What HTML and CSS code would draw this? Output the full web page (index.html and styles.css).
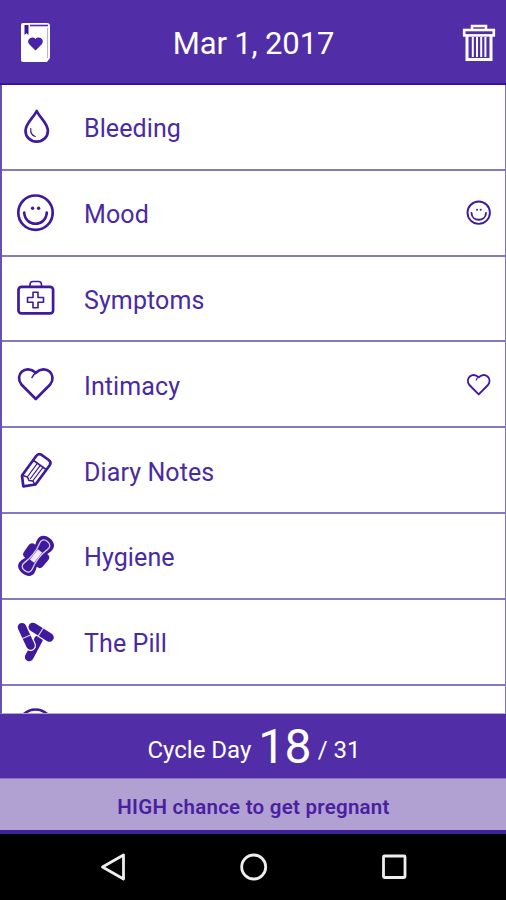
FILE: index.html
```html
<!DOCTYPE html>
<html lang="en">
<head>
  <meta charset="UTF-8" />
  <meta name="viewport" content="width=device-width, initial-scale=1" />
  <title>Mar 1, 2017</title>
  <link rel="stylesheet" href="styles.css">
</head>
<body>
  <div class="app">
    <header class="header">
      <svg class="book" width="32" height="42" viewBox="0 0 32 42">
        <path d="M3 1h24a3 3 0 0 1 3 3v32l-3 4H3a2 2 0 0 1-2-2V3a2 2 0 0 1 2-2z" fill="#fff"/>
        <path d="M10 3.500h18" stroke="#512da8" stroke-width="1.600"/>
        <path d="M27.600 6v30" stroke="#b8a6dc" stroke-width="1"/>
        <path d="M4.500 3h4v10l-2-1.800-2 1.800z" fill="#3a1798"/>
        <path d="M15.500 28.500l-6.500-6.500c-3-4.500 3-9 6.500-5 3.500-4 9.500.5 6.500 5z" fill="#4a22a5"/>
      </svg>
      <h1>Mar 1, 2017</h1>
      <svg class="trash" width="34" height="40" viewBox="0 0 34 40" fill="none" stroke="#fff">
        <path d="M10 6V3h14v3" stroke-width="2.500"/>
        <rect x="2.200" y="7" width="29.600" height="5.400" stroke-width="2.600"/>
        <path d="M5 12v24.500h24V12" stroke-width="3"/>
        <path d="M10.800 14v20M15 14v20M19.200 14v20M23.400 14v20" stroke-width="2"/>
      </svg>
    </header>

    <main class="list">
      <div class="row">
        <svg class="icon" viewBox="0 0 40 40">
          <path d="M20.700 4C17.500 11 9.500 16 9.500 24a11.200 10.700 0 0 0 22.400 0C31.900 16 24 11 20.700 4z"/>
          <path class="thin" d="M14.800 21.500c-.5 4 1.500 7 4.500 8"/>
        </svg>
        <span class="label">Bleeding</span>
      </div>
      <div class="row">
        <svg class="icon" viewBox="0 0 40 40">
          <circle cx="19.500" cy="19.700" r="17.200"/>
          <path d="M8.200 19.500c1 15 21.600 15 22.600 0"/>
          <circle class="dot" cx="16.600" cy="15.200" r="1.700"/>
          <circle class="dot" cx="22.600" cy="15.200" r="1.700"/>
        </svg>
        <span class="label">Mood</span>
        <svg class="mark" viewBox="0 0 26 26">
          <circle cx="12.700" cy="12.700" r="11.200"/>
          <path d="M5.500 13c.5 9 14 9 14.500 0"/>
          <circle class="dot" cx="11" cy="9.800" r="1"/>
          <circle class="dot" cx="14.700" cy="9.800" r="1"/>
        </svg>
      </div>
      <div class="row">
        <svg class="icon" viewBox="0 0 40 40">
          <rect x="2.500" y="8.800" width="34.600" height="26.600" rx="3"/>
          <path class="mid" d="M14 8V6.500q0-3 3-3h5.500q3 0 3 3V8"/>
          <path class="mid" d="M17 14.200h5v5.300h5.500v4.800H22v5.500h-5v-5.500h-5.500v-4.800H17z"/>
        </svg>
        <span class="label">Symptoms</span>
      </div>
      <div class="row">
        <svg class="icon" viewBox="0 0 40 40">
          <path d="M19.800 35L5.400 20.500C-2 11 9.500-.5 19.800 8.800 30-.5 41.500 11 34.200 20.500z"/>
          <path class="mid" d="M20 9q-3 1.500-4 4.500"/>
        </svg>
        <span class="label">Intimacy</span>
        <svg class="mark" viewBox="0 0 26 26">
          <path d="M12.700 23.400L3.400 14C-1.300 7.500 6.200.5 12.700 6.200 19.200.5 26.700 7.500 22 14z"/>
          <path class="thin" d="M12.700 6q-2 1-2.500 3"/>
        </svg>
      </div>
      <div class="row">
        <svg class="icon" viewBox="0 0 40 40">
          <path d="M7.300 36.300L6 25.500 20.200 6q2.200-3 5-1.300l7.500 5.300q3 2.300 1 5.200L19.500 34.500z"/>
          <path class="mid" d="M17.500 10.500l12.700 9M6.500 25.500l5 1.500 1.500 3.500 4 .5 1.800 3.500"/>
          <path class="thin" d="M12 26l9.500-12.800M17 30.500L27 17.300M14.500 28.500L24.300 15.300"/>
        </svg>
        <span class="label">Diary Notes</span>
      </div>
      <div class="row">
        <svg class="icon" viewBox="0 0 40 40">
          <g transform="rotate(38 20 20)">
            <path class="solid" d="M12 11.500h16q4.500 0 4.200 5l-.4 7.500q0 4-4 4H12q-4 0-4-4l-.4-7.500q-.3-5 4.400-5z"/>
            <path class="solid" d="M20-2.500c6.500 0 10 4 9 9-.7 4-3 7-3 13.500s2.300 9.500 3 13.500c1 5-2.500 8.500-9 8.500s-10-3.500-9-8.500c.7-4 3-7 3-13.500s-2.300-9.500-3-13.500c-1-5 2.500-9 9-9z"/>
            <path class="light" d="M20 1.500c4.500 0 6 3 5 6.500-1.200 4-1.700 7-1.700 12s.5 8 1.700 12c1 3.500-.5 6.500-5 6.500s-6-3-5-6.500c1.200-4 1.700-7 1.700-12s-.5-8-1.700-12c-1-3.500.5-6.500 5-6.500z"/>
            <path class="fill-light" d="M17.400 13.500h5.200v13h-5.200z"/>
          </g>
        </svg>
        <span class="label">Hygiene</span>
      </div>
      <div class="row">
        <svg class="icon" viewBox="0 0 40 40">
          <path class="pill" d="M22.500 17.500L13.200 35"/>
          <path class="pill-edge" d="M6 5.200L14.500 23.500"/>
          <path class="pill" d="M6 5.200L14.500 23.500"/>
          <path class="pill-edge" d="M16.800 5L33.500 15.500"/>
          <path class="pill" d="M16.800 5L33.500 15.500"/>
          <path class="light" d="M6.500 16.500l8-3.500M27 6.500l-4.500 7"/>
        </svg>
        <span class="label">The Pill</span>
      </div>
      <div class="row">
        <svg class="icon" viewBox="0 0 40 40">
          <circle cx="19.500" cy="19.700" r="17.200"/>
        </svg>
      </div>
    </main>

    <div class="cycle">
      <span>Cycle Day</span>
      <span class="day">18</span>
      <span>/ 31</span>
    </div>
    <div class="chance">HIGH chance to get pregnant</div>

    <nav class="navbar">
      <svg viewBox="0 0 30 30"><path d="M3.500 15L24.500 3v24z"/></svg>
      <svg viewBox="0 0 30 30"><circle cx="14.700" cy="15" r="12"/></svg>
      <svg viewBox="0 0 30 30"><rect x="4.500" y="4" width="21.500" height="21.500" rx="1"/></svg>
    </nav>
  </div>
</body>
</html>
```

FILE: styles.css
```css
* {
  box-sizing: border-box;
}
body {
  margin: 0;
  background: #000;
  font-family: Roboto, sans-serif;
}
.app {
  width: 506px;
  height: 900px;
  display: flex;
  flex-direction: column;
  overflow: hidden;
}
.header {
  flex: none;
  height: 85px;
  padding: 3px 10px 0 20px;
  display: flex;
  align-items: center;
  justify-content: space-between;
  background: #512da8;
  border-bottom: 2px solid #3512a0;
}
.header h1 {
  margin: 0 7px 0 0;
  font-size: 31px;
  font-weight: 400;
  letter-spacing: -0.15px;
  color: #fff;
}
.list {
  flex: none;
  height: 629px;
  overflow: hidden;
  background: #fff;
  border-left: 2px solid #6650b0;
  border-right: 1px solid #8270c4;
  border-bottom: 1px solid #b3a5d9;
}
.row {
  height: 85.8px;
  padding: 0 13px 0 14px;
  display: flex;
  align-items: center;
  border-bottom: 2px solid #8878c0;
}
.icon,
.mark {
  flex: none;
  fill: none;
  stroke: #3f1a9c;
  stroke-width: 2.7;
  stroke-linejoin: round;
  stroke-linecap: round;
}
.icon {
  width: 40px;
  height: 40px;
  overflow: visible;
}
.mark {
  width: 26px;
  height: 26px;
  stroke-width: 1.9;
}
.thin {
  stroke-width: 1.2;
}
.mid {
  stroke-width: 1.6;
}
.dot,
.solid {
  fill: #3f1a9c;
  stroke: none;
}
.light {
  stroke: #d9cfee;
  stroke-width: 1.3;
}
.fill-light {
  fill: #f0ebf8;
  stroke: none;
}
.pill {
  stroke-width: 8.6;
}
.pill-edge {
  stroke: #fff;
  stroke-width: 11;
}
.label {
  flex: 1;
  margin-left: 28px;
  padding-top: 4px;
  font-size: 25px;
  letter-spacing: 0.1px;
  color: #4a2aa3;
}
.cycle {
  flex: none;
  height: 64px;
  padding-left: 2px;
  display: flex;
  justify-content: center;
  align-items: center;
  gap: 7px;
  font-size: 24px;
  line-height: 64px;
  color: #fff;
  background: #512da8;
}
.cycle span {
  padding-top: 7px;
}
.cycle .day {
  padding-top: 2px;
  font-size: 48px;
  letter-spacing: -0.8px;
}
.chance {
  flex: none;
  height: 56px;
  padding: 2px 0 0 1px;
  text-align: center;
  font-size: 20.5px;
  font-weight: 600;
  letter-spacing: 0.25px;
  line-height: 52px;
  color: #4a20a0;
  background: #b1a1d3;
  border-top: 1px solid #8b74c5;
  border-bottom: 4px solid #42209a;
}
.navbar {
  flex: 1;
  padding: 0 97px 0 99px;
  display: flex;
  align-items: center;
  justify-content: space-between;
  background: #000;
}
.navbar svg {
  width: 30px;
  height: 30px;
  fill: none;
  stroke: #eee;
  stroke-width: 2.8;
  stroke-linejoin: round;
}
```
